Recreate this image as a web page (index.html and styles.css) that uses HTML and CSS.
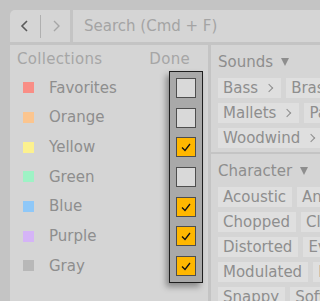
FILE: index.html
```html
<!DOCTYPE html>
<html lang="en">
<head>
  <meta charset="UTF-8" />
  <meta name="viewport" content="width=device-width, initial-scale=1.0"/>
  <title>Browser Collections</title>
  <link rel="stylesheet" href="styles.css">
</head>
<body>
  <div class="app">
    <div class="topbar">
      <div class="nav">
        <svg class="nav-arrow" width="10" height="12" viewBox="0 0 10 12"><path d="M7 1 L2 6 L7 11" fill="none" stroke="#5a5a5a" stroke-width="1.6"/></svg>
        <span class="nav-divider"></span>
        <svg class="nav-arrow" width="10" height="12" viewBox="0 0 10 12"><path d="M3 1 L8 6 L3 11" fill="none" stroke="#a6a6a6" stroke-width="1.4"/></svg>
      </div>
      <div class="search">Search (Cmd + F)</div>
    </div>

    <div class="main">
      <div class="collections">
        <div class="coll-head">
          <span>Collections</span>
          <span>Done</span>
        </div>
        <div class="coll-row"><span class="swatch favorites"></span>Favorites</div>
        <div class="coll-row"><span class="swatch orange"></span>Orange</div>
        <div class="coll-row"><span class="swatch yellow"></span>Yellow</div>
        <div class="coll-row"><span class="swatch green"></span>Green</div>
        <div class="coll-row"><span class="swatch blue"></span>Blue</div>
        <div class="coll-row"><span class="swatch purple"></span>Purple</div>
        <div class="coll-row"><span class="swatch gray"></span>Gray</div>

        <!-- checkbox column shown over the list -->
        <div class="checks">
          <span class="check"></span>
          <span class="check"></span>
          <span class="check on"><svg width="18" height="18" viewBox="0 0 18 18"><path d="M5 9.5 L8 12.5 L13 6" fill="none" stroke="#111" stroke-width="1.3"/></svg></span>
          <span class="check"></span>
          <span class="check on"><svg width="18" height="18" viewBox="0 0 18 18"><path d="M5 9.5 L8 12.5 L13 6" fill="none" stroke="#111" stroke-width="1.3"/></svg></span>
          <span class="check on"><svg width="18" height="18" viewBox="0 0 18 18"><path d="M5 9.5 L8 12.5 L13 6" fill="none" stroke="#111" stroke-width="1.3"/></svg></span>
          <span class="check on"><svg width="18" height="18" viewBox="0 0 18 18"><path d="M5 9.5 L8 12.5 L13 6" fill="none" stroke="#111" stroke-width="1.3"/></svg></span>
        </div>
      </div>

      <div class="tags">
        <div class="section">
          <div class="sec-head">Sounds <span class="tri"></span></div>
          <div class="tag-row">
            <span class="tag">Bass<i class="chev"></i></span>
            <span class="tag">Brass<i class="chev"></i></span>
          </div>
          <div class="tag-row">
            <span class="tag">Mallets<i class="chev"></i></span>
            <span class="tag">Pad<i class="chev"></i></span>
          </div>
          <div class="tag-row">
            <span class="tag">Woodwind<i class="chev"></i></span>
          </div>
        </div>
        <div class="section">
          <div class="sec-head">Character <span class="tri"></span></div>
          <div class="tag-row">
            <span class="tag">Acoustic</span>
            <span class="tag">Analog</span>
          </div>
          <div class="tag-row">
            <span class="tag">Chopped</span>
            <span class="tag">Clean</span>
          </div>
          <div class="tag-row">
            <span class="tag">Distorted</span>
            <span class="tag">Evolving</span>
          </div>
          <div class="tag-row">
            <span class="tag">Modulated</span>
            <span class="tag">Noisy</span>
          </div>
          <div class="tag-row">
            <span class="tag">Snappy</span>
            <span class="tag">Soft</span>
          </div>
        </div>
      </div>
    </div>
  </div>
</body>
</html>
```

FILE: styles.css
```css
body {
  margin: 0;
  background-color: #c4c4c4;
  font-family: "DejaVu Sans", sans-serif;
  font-size: 15px;
  color: #8e8e8e;
  overflow: hidden;
}
.app {
  width: 320px;
  height: 301px;
  padding: 10px 0 0 10px;
  box-sizing: border-box;
  display: flex;
  flex-direction: column;
  gap: 3px;
}
.topbar {
  display: flex;
  gap: 3px;
  height: 32px;
}
.nav {
  width: 60px;
  background-color: #d5d5d5;
  border-radius: 5px 0 0 0;
  display: flex;
  align-items: center;
  padding-left: 10px;
  box-sizing: border-box;
}
.nav-divider {
  width: 1px;
  height: 23px;
  background-color: #b0b0b0;
  margin: 0 10px 0 10px;
}
.search {
  flex: 1;
  background-color: #d5d5d5;
  color: #a4a4a4;
  padding-left: 11px;
  line-height: 32px;
  white-space: nowrap;
}
.main {
  flex: 1;
  display: flex;
  gap: 3px;
  min-height: 0;
}
.collections {
  width: 198px;
  background-color: #d5d5d5;
  position: relative;
}
.coll-head {
  height: 28px;
  display: flex;
  justify-content: space-between;
  align-items: center;
  padding: 0 18px 0 7px;
  color: #a6a6a6;
  letter-spacing: 0.3px;
}
.coll-row {
  height: 29.67px;
  display: flex;
  align-items: center;
  padding-left: 13px;
}
.swatch {
  width: 11px;
  height: 11px;
  margin-right: 15px;
}
.favorites { background-color: #f98e86; }
.orange { background-color: #fbc58f; }
.yellow { background-color: #fcf18f; }
.green { background-color: #9ef2c5; }
.blue { background-color: #8fc8f8; }
.purple { background-color: #d5b4f7; }
.gray { background-color: #b8b8b8; }

.checks {
  position: absolute;
  left: 159px;
  top: 26px;
  width: 32px;
  padding: 6px 0;
  border: 1px solid #1e1e1e;
  background-color: #a9a9a9;
  display: flex;
  flex-direction: column;
  align-items: center;
  gap: 9.67px;
  box-shadow: -3px 4px 6px rgba(0, 0, 0, 0.35);
}
.check {
  width: 18px;
  height: 18px;
  border: 1px solid #4e4e4e;
  background-color: #d9d9d9;
  display: block;
}
.check svg {
  display: block;
}
.check.on {
  background-color: #ffb700;
}

.tags {
  flex: 1;
  display: flex;
  flex-direction: column;
  gap: 2px;
  overflow: hidden;
}
.section {
  background-color: #d5d5d5;
  padding: 4px 0 4px 7px;
}
.sec-head {
  height: 26px;
  line-height: 26px;
  margin-bottom: 3px;
  white-space: nowrap;
}
.tri {
  display: inline-block;
  width: 0;
  height: 0;
  border-left: 4px solid transparent;
  border-right: 4px solid transparent;
  border-top: 8px solid #8e8e8e;
  margin-left: 3px;
  vertical-align: 1px;
}
.tag-row {
  display: flex;
  gap: 5px;
  white-space: nowrap;
  margin-bottom: 5px;
}
.tag-row:last-child {
  margin-bottom: 0;
}
.tag {
  height: 20px;
  line-height: 20px;
  padding: 0 6px 0 5px;
  background-color: #dfdfdf;
  display: flex;
  align-items: center;
  flex-shrink: 0;
}
.chev {
  width: 5px;
  height: 5px;
  border-right: 1.5px solid #8e8e8e;
  border-top: 1.5px solid #8e8e8e;
  transform: rotate(45deg);
  margin: 0 3px 0 8px;
}
```
